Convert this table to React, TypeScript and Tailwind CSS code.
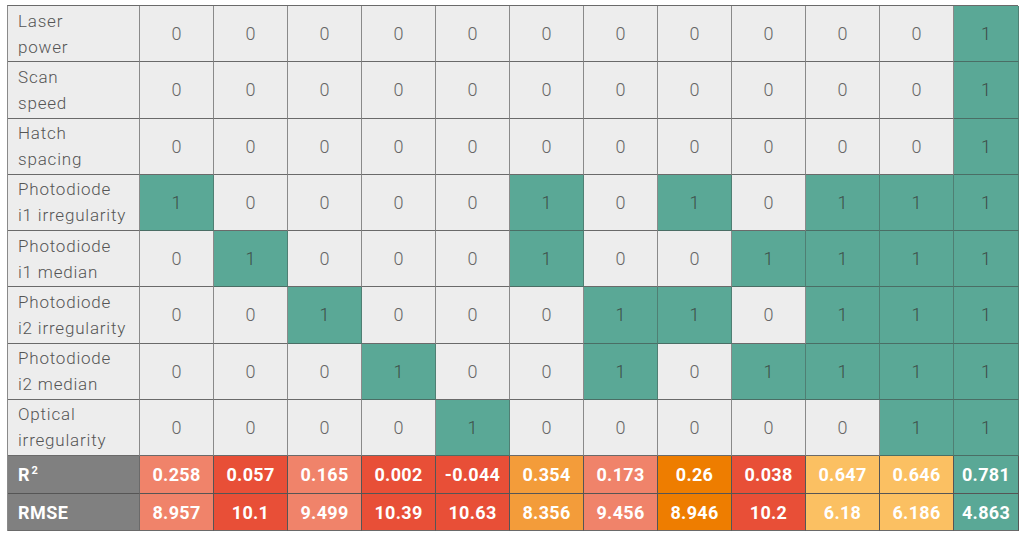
import React from "react";

const labels: [string, string][] = [
  ["Laser", "power"],
  ["Scan", "speed"],
  ["Hatch", "spacing"],
  ["Photodiode", "i1 irregularity"],
  ["Photodiode", "i1 median"],
  ["Photodiode", "i2 irregularity"],
  ["Photodiode", "i2 median"],
  ["Optical", "irregularity"],
];

const data: number[][] = [
  [0, 0, 0, 0, 0, 0, 0, 0, 0, 0, 0, 1],
  [0, 0, 0, 0, 0, 0, 0, 0, 0, 0, 0, 1],
  [0, 0, 0, 0, 0, 0, 0, 0, 0, 0, 0, 1],
  [1, 0, 0, 0, 0, 1, 0, 1, 0, 1, 1, 1],
  [0, 1, 0, 0, 0, 1, 0, 0, 1, 1, 1, 1],
  [0, 0, 1, 0, 0, 0, 1, 1, 0, 1, 1, 1],
  [0, 0, 0, 1, 0, 0, 1, 0, 1, 1, 1, 1],
  [0, 0, 0, 0, 1, 0, 0, 0, 0, 0, 1, 1],
];

const r2 = ["0.258", "0.057", "0.165", "0.002", "-0.044", "0.354", "0.173", "0.26", "0.038", "0.647", "0.646", "0.781"];
const rmse = ["8.957", "10.1", "9.499", "10.39", "10.63", "8.356", "9.456", "8.946", "10.2", "6.18", "6.186", "4.863"];

const colorCls = [
  "bg-[#f0836a]",
  "bg-[#e84f37]",
  "bg-[#f0836a]",
  "bg-[#e84f37]",
  "bg-[#e84f37]",
  "bg-[#f39c3a]",
  "bg-[#f0836a]",
  "bg-[#ee7d00]",
  "bg-[#e84f37]",
  "bg-[#fbc062]",
  "bg-[#fbc062]",
  "bg-[#5aa896]",
];

const font = { fontFamily: "Roboto, 'Liberation Sans', sans-serif" };

export default function App() {
  return (
    <div className="w-[1024px] h-[536px] bg-white pt-[5px] pl-[7px]" style={font}>
      <div className="grid grid-cols-[132px_repeat(11,74px)_65px] grid-rows-[repeat(8,56.25px)_38px_37px] w-[1011px] border-t border-l border-t-[#6a6a6a] border-l-[#8a8a8a]">
        {labels.map((lab, r) => (
          <React.Fragment key={r}>
            <div className="bg-[#ededed] border-r border-b border-r-[#8a8a8a] border-b-[#6a6a6a] flex flex-col justify-center pl-[10px] text-[17px] leading-[26px] font-light text-[#555] tracking-[0.8px]">
              <span>{lab[0]}</span>
              <span>{lab[1]}</span>
            </div>
            {data[r].map((v, c) => (
              <div
                key={c}
                className={
                  "border-r border-b flex items-center justify-center text-[18px] font-light " +
                  (v === 1
                    ? "bg-[#5aa896] text-[#3d4b47] border-r-[#4f7f73] border-b-[#4a6e65]"
                    : "bg-[#ededed] text-[#666] border-r-[#8a8a8a] border-b-[#6a6a6a]")
                }
              >
                {v}
              </div>
            ))}
          </React.Fragment>
        ))}
        <div className="bg-[#808080] border-r border-b border-r-[#6a6a6a] border-b-[#555] flex items-center pl-[10px] text-[18px] font-bold text-white">
          <span className="leading-none">
            R<span className="text-[11px] align-[7px] ml-[2px]">2</span>
          </span>
        </div>
        {r2.map((v, c) => (
          <div
            key={c}
            className={
              "border-r border-b border-r-[#555] border-b-[#555] flex items-center justify-center text-[18px] font-bold text-white tracking-[0.3px] " +
              colorCls[c]
            }
          >
            {v}
          </div>
        ))}
        <div className="bg-[#808080] border-r border-b border-r-[#6a6a6a] border-b-[#6a6a6a] flex items-center pl-[10px] text-[18px] font-bold text-white tracking-[0.5px]">
          RMSE
        </div>
        {rmse.map((v, c) => (
          <div
            key={c}
            className={
              "border-r border-b border-r-[#555] border-b-[#6a6a6a] flex items-center justify-center text-[18px] font-bold text-white tracking-[0.3px] " +
              colorCls[c]
            }
          >
            {v}
          </div>
        ))}
      </div>
    </div>
  );
}
